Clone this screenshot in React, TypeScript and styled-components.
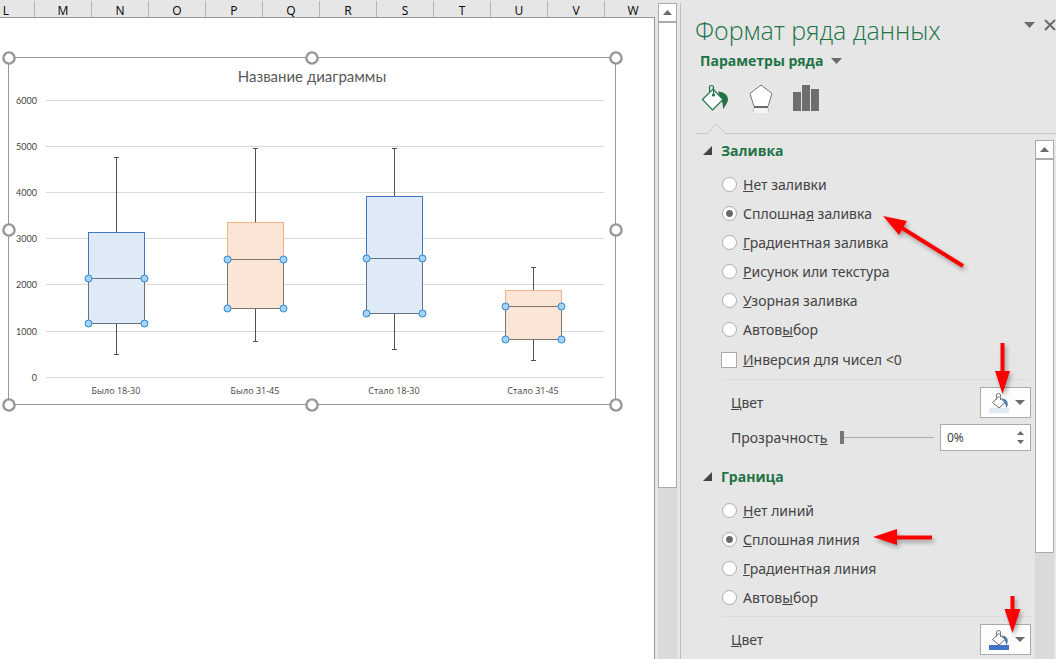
import React, { useState } from 'react';
import styled, { createGlobalStyle } from 'styled-components';

const ui = '"Noto Sans", "Open Sans", sans-serif';
const headingFont = '"Open Sans", "Noto Sans", sans-serif';
const sheetFont = 'Lato, "Noto Sans", sans-serif';

const GlobalStyle = createGlobalStyle`
  * { box-sizing: border-box; }
  body { margin: 0; background: #e6e6e6; font-family: ${ui}; color: #444; }
`;

const Window = styled.div`
  display: flex;
  height: 100vh;
  overflow: hidden;
`;

const Sheet = styled.main`
  flex: 1;
  min-width: 0;
  display: flex;
  flex-direction: column;
  margin-right: 3px;
`;

const ColumnHeads = styled.div`
  display: flex;
  flex: none;
  height: 18px;
  padding-top: 1px;
  overflow: hidden;
  border-bottom: 1px solid #979797;
`;

const ColumnHead = styled.div`
  flex: none;
  width: 57px;
  border-right: 1px solid #b4b4b4;
  text-align: center;
  font: 12px/19px "Noto Sans", sans-serif;
  color: #111;
  &:first-child { margin-left: -22px; }
`;

const Cells = styled.div`
  flex: 1;
  min-height: 0;
  padding-top: 32px;
  background: #fff;
  border-right: 1px solid #979797;
  overflow: hidden;
`;

const ChartSvg = styled.svg`
  display: block;
  font-family: ${sheetFont};
  fill: #595959;
`;

const Scroller = styled.div<{ $top: number }>`
  flex: none;
  width: 19px;
  display: flex;
  flex-direction: column;
  margin-top: ${p => p.$top}px;
  background: #dadada;
`;

const ScrollButton = styled.button`
  flex: none;
  height: 19px;
  padding: 0;
  display: flex;
  align-items: center;
  justify-content: center;
  background: #fff;
  border: 1px solid #ababab;
`;

const Thumb = styled.div<{ $share: number }>`
  height: ${p => p.$share}%;
  background: #fff;
  border: 1px solid #ababab;
`;

const Pane = styled.aside`
  position: relative;
  flex: none;
  width: 376px;
  margin: 3px 0 0 3px;
  border-left: 1px solid #bdbdbd;
  display: flex;
  flex-direction: column;
`;

const PaneHead = styled.header`
  display: flex;
  justify-content: space-between;
  padding: 8px 0 0 14px;
`;

const PaneTitle = styled.h1`
  margin: 0;
  font-family: ${headingFont};
  font-size: 25px;
  line-height: 39px;
  font-weight: 300;
  color: #217346;
`;

const PaneTools = styled.div`
  display: flex;
  align-items: center;
  height: 28px;
  gap: 9px;
`;

const PlainButton = styled.button`
  display: flex;
  align-items: center;
  padding: 0;
  border: 0;
  background: none;
  font: inherit;
  color: inherit;
`;

const SeriesButton = styled(PlainButton)`
  gap: 8px;
  margin-left: 19px;
  font-family: ${headingFont};
  font-size: 14px;
  line-height: 22px;
  font-weight: 700;
  color: #217346;
`;

const Tabs = styled.nav`
  display: flex;
  align-items: center;
  gap: 19px;
  height: 38px;
  margin: 7px 0 0 20px;
`;

const Notch = styled.div`
  display: flex;
  height: 12px;
  margin: 5px 1px 0 14px;
  svg { flex: none; }
  &::before, &::after { content: ''; border-bottom: 1px solid #c6c6c6; }
  &::before { width: 13px; }
  &::after { flex: 1; }
`;

const PaneBody = styled.div`
  flex: 1;
  min-height: 0;
  display: flex;
  padding-right: 2px;
`;

const Options = styled.div`
  flex: 1;
  min-width: 0;
  padding: 4px 4px 0 22px;
  overflow: hidden;
`;

const Section = styled.section`
  & + & { margin-top: 13px; }
`;

const SectionTitle = styled.h2`
  display: flex;
  align-items: center;
  gap: 9px;
  height: 24px;
  margin: 0 0 8px;
  font-family: ${headingFont};
  font-size: 14px;
  font-weight: 700;
  color: #217346;
`;

const SectionBody = styled.div`
  padding-left: 18px;
  font-size: 14px;
`;

const Choice = styled.label`
  display: flex;
  align-items: center;
  gap: 6px;
  height: 29px;
  padding-left: 1px;
`;

const CheckChoice = styled(Choice)`
  height: 31px;
  padding-left: 0;
`;

const Radio = styled.input`
  appearance: none;
  flex: none;
  width: 15px;
  height: 15px;
  margin: 0;
  border: 1px solid #ababab;
  border-radius: 50%;
  background: #fff;
  &:checked { background: radial-gradient(circle, #6a6a6a 3px, #fff 4px); }
`;

const Check = styled.input`
  appearance: none;
  flex: none;
  width: 16px;
  height: 16px;
  margin: 0;
  border: 1px solid #ababab;
  background: #fff;
  &:checked { background: #6a6a6a; }
`;

const Rule = styled.hr`
  height: 1px;
  margin: 4px 0 7px;
  border: 0;
  background: #dcdcdc;
`;

const Field = styled.div`
  display: flex;
  align-items: center;
  padding-left: 10px;
  & + & { margin-top: 6px; }
`;

const ColorButton = styled.button`
  display: flex;
  align-items: center;
  gap: 6px;
  width: 51px;
  height: 31px;
  margin-left: auto;
  padding: 0 0 0 8px;
  background: #fdfdfd;
  border: 1px solid #ababab;
`;

const Slider = styled.input`
  appearance: none;
  flex: none;
  width: 94px;
  height: 13px;
  margin: 0 6px 0 auto;
  background: linear-gradient(#ababab, #ababab) center / 100% 1px no-repeat;
  &::-webkit-slider-thumb {
    appearance: none;
    width: 4px;
    height: 13px;
    background: #777;
  }
`;

const Spinner = styled.div`
  display: flex;
  flex: none;
  width: 91px;
  height: 27px;
  background: #fff;
  border: 1px solid #ababab;
`;

const SpinnerInput = styled.input`
  flex: 1;
  min-width: 0;
  padding: 0 6px;
  border: 0;
  background: none;
  font: 12px ${ui};
  color: #444;
`;

const SpinnerButtons = styled.div`
  display: flex;
  flex-direction: column;
  justify-content: space-evenly;
  padding-right: 6px;
`;

const Notes = styled.svg`
  position: absolute;
  top: -3px;
  left: 0;
  pointer-events: none;
  filter: drop-shadow(2px 3px 2px rgba(0, 0, 0, 0.3));
`;

const Triangle = ({ w, h, up = false }: { w: number; h: number; up?: boolean }) => (
  <svg width={w} height={h} viewBox="0 0 10 10" preserveAspectRatio="none" aria-hidden="true">
    <path d={up ? 'M0 10L5 0L10 10Z' : 'M0 0L5 10L10 0Z'} fill="#6a6a6a" />
  </svg>
);

const zeroY = 377;
const scale = 46.2 / 1000;
const y = (v: number) => Math.floor(zeroY - v * scale + 0.3) + 0.5;

const boxes = [
  { label: 'Было 18-30', x: 116, low: 500, q1: 1165, mid: 2130, q3: 3140, high: 4760, warm: false },
  { label: 'Было 31-45', x: 255, low: 780, q1: 1490, mid: 2550, q3: 3350, high: 4950, warm: true },
  { label: 'Стало 18-30', x: 394, low: 605, q1: 1380, mid: 2575, q3: 3920, high: 4950, warm: false },
  { label: 'Стало 31-45', x: 533, low: 370, q1: 810, mid: 1530, q3: 1880, high: 2370, warm: true },
];

const frameHandles = [
  [9, 58], [312, 58], [616, 58], [9, 230], [616, 230], [9, 405], [312, 405], [616, 405],
];

const Chart = () => (
  <ChartSvg width="625" height="362" viewBox="0 50 625 362" role="img" aria-label="Название диаграммы">
    <rect x="8.5" y="57.5" width="607" height="347" fill="#fff" stroke="#979797" />
    <text x="312" y="82" fontSize="15" textAnchor="middle">Название диаграммы</text>
    {[0, 1000, 2000, 3000, 4000, 5000, 6000].map(v => (
      <g key={v}>
        <path d={`M46 ${y(v)}H604`} stroke="#d9d9d9" />
        <text x="37" y={y(v) + 3} fontSize="9" textAnchor="end" fill="#444">{v}</text>
      </g>
    ))}
    {boxes.map(b => {
      const l = b.x - 27.5;
      return (
        <g key={b.label} fill="none">
          <path d={`M${b.x - 2} ${y(b.high)}h5m-2.5 0V${y(b.q3)}M${b.x + 0.5} ${y(b.q1)}V${y(b.low)}m-2.5 0h5`} stroke="#505050" />
          <rect x={l} y={y(b.q3)} width="56" height={y(b.q1) - y(b.q3)} fill={b.warm ? '#fbe5d6' : '#deeaf6'} stroke={b.warm ? '#f4b183' : '#4472c4'} />
          <rect x={l} y={y(b.mid)} width="56" height={y(b.q1) - y(b.mid)} stroke={b.warm ? '#7f736c' : '#66728a'} />
          {[l, l + 56].map(cx => [b.mid, b.q1].map(v => (
            <circle key={`${cx}-${v}`} cx={cx} cy={y(v)} r="3.5" fill="#a8d1f2" stroke="#2488d8" />
          )))}
          <text x={b.x} y="394" fontSize="9" textAnchor="middle" fill="#444" fontFamily="Open Sans, Noto Sans, sans-serif">{b.label}</text>
        </g>
      );
    })}
    {frameHandles.map(([cx, cy]) => (
      <circle key={`${cx}-${cy}`} cx={cx} cy={cy} r="5.6" fill="#fff" stroke="#979797" strokeWidth="2.400" />
    ))}
  </ChartSvg>
);

const FillTabIcon = () => (
  <svg width="28" height="28" viewBox="0 0 28 28" aria-hidden="true">
    <path d="M17 7.500C23 8 27 11 27 15.500C27 19 23.500 22 22.500 25.500C21.500 21 22 18 19 13Z" fill="#217346" />
    <path d="M1.500 15.500L12 5L22 15.500L11.500 26Z" fill="#fff" stroke="#217346" strokeWidth="1.200" />
    <path d="M8.500 8V3.500Q8.500 1.500 10.500 1.500T12.500 3.500V11" fill="none" stroke="#217346" strokeWidth="1.200" />
    <circle cx="12.500" cy="11" r="1.600" fill="#217346" />
  </svg>
);

const EffectsTabIcon = () => (
  <svg width="26" height="30" viewBox="0 0 26 30" aria-hidden="true">
    <path d="M6 25H20L22 30H4Z" fill="#f5f5f5" />
    <path d="M6 25L4.500 29.500M20 25L21.500 29.500" stroke="#c0c0c0" />
    <path d="M13 2L24 10.500L20 23.500H6L2 10.500Z" fill="#fff" stroke="#777" />
    <path d="M6 24H20" stroke="#6a6a6a" strokeWidth="2" />
  </svg>
);

const SeriesTabIcon = () => (
  <svg width="26" height="26" viewBox="0 0 26 26" fill="#6e6e6e" aria-hidden="true">
    <path d="M0 7H8V26H0ZM9 0H17V26H9ZM18 4H26V26H18Z" />
  </svg>
);

const SwatchIcon = ({ color }: { color: string }) => (
  <svg width="20" height="20" viewBox="0 0 20 20" aria-hidden="true">
    <path d="M13 5.500C18 6 20.500 10 17.500 15C16.500 12 16.500 10 13 8Z" fill="#4a7fb5" />
    <path d="M3.500 9.500L10 3.500L16 9.500L10 15Z" fill="#fff" stroke="#6a6a6a" />
    <path d="M7.500 6.500V2Q7.500 0.500 9.500 0.500T11.500 2V7" fill="none" stroke="#777" />
    <rect y="15" width="20" height="5" fill={color} />
  </svg>
);

// A text label whose access key letter is underlined.
const Keyed = ({ text, at }: { text: string; at: number }) => (
  <span>{text.slice(0, at)}<u>{text[at]}</u>{text.slice(at + 1)}</span>
);

type Option = [text: string, key: number];

const RadioList = ({ name, options }: { name: string; options: Option[] }) => (
  <>
    {options.map(([text, at], i) => (
      <Choice key={text}>
        <Radio type="radio" name={name} defaultChecked={i === 1} />
        <Keyed text={text} at={at} />
      </Choice>
    ))}
  </>
);

const Heading = ({ children }: { children: string }) => (
  <SectionTitle>
    <svg width="9" height="9" viewBox="0 0 9 9" aria-hidden="true"><path d="M9 0V9H0Z" fill="#444" /></svg>
    {children}
  </SectionTitle>
);

const ColorField = ({ id, color }: { id: string; color: string }) => (
  <Field>
    <label htmlFor={id}><Keyed text="Цвет" at={0} /></label>
    <ColorButton id={id} type="button"><SwatchIcon color={color} /><Triangle w={10} h={5} /></ColorButton>
  </Field>
);

const Scrollbar = ({ top, share }: { top: number; share: number }) => (
  <Scroller $top={top}>
    <ScrollButton type="button" aria-label="Вверх"><Triangle w={9} h={5} up /></ScrollButton>
    <Thumb $share={share} />
  </Scroller>
);

export default function App() {
  const [opacity, setOpacity] = useState(0);
  const step = (d: number) => setOpacity(v => Math.min(100, Math.max(0, v + d)));
  return (
    <Window>
      <GlobalStyle />
      <Sheet>
        <ColumnHeads>
          {[...'LMNOPQRSTUVW'].map(c => <ColumnHead key={c}>{c}</ColumnHead>)}
        </ColumnHeads>
        <Cells><Chart /></Cells>
      </Sheet>
      <Scrollbar top={3} share={71} />
      <Pane>
        <PaneHead>
          <PaneTitle>Формат ряда данных</PaneTitle>
          <PaneTools>
            <PlainButton type="button" aria-label="Параметры области"><Triangle w={11} h={6} /></PlainButton>
            <PlainButton type="button" aria-label="Закрыть">
              <svg width="12" height="12" viewBox="0 0 12 12"><path d="M1 1L11 11M11 1L1 11" stroke="#6a6a6a" strokeWidth="2" /></svg>
            </PlainButton>
          </PaneTools>
        </PaneHead>
        <SeriesButton type="button">Параметры ряда <Triangle w={11} h={6} /></SeriesButton>
        <Tabs>
          <PlainButton type="button" aria-label="Заливка и границы"><FillTabIcon /></PlainButton>
          <PlainButton type="button" aria-label="Эффекты"><EffectsTabIcon /></PlainButton>
          <PlainButton type="button" aria-label="Параметры ряда"><SeriesTabIcon /></PlainButton>
        </Tabs>
        <Notch>
          <svg width="17" height="12" viewBox="0 0 17 12" aria-hidden="true"><path d="M0 11.500L8.500 1.500L17 11.500" fill="none" stroke="#c6c6c6" /></svg>
        </Notch>
        <PaneBody>
          <Options>
            <Section>
              <Heading>Заливка</Heading>
              <SectionBody>
                <RadioList name="fill" options={[['Нет заливки', 0], ['Сплошная заливка', 7], ['Градиентная заливка', 0], ['Рисунок или текстура', 0], ['Узорная заливка', 0], ['Автовыбор', 5]]} />
                <CheckChoice><Check type="checkbox" /><Keyed text="Инверсия для чисел <0" at={0} /></CheckChoice>
                <Rule />
                <ColorField id="fill-color" color="#deeaf6" />
                <Field>
                  <label htmlFor="opacity"><Keyed text="Прозрачность" at={11} /></label>
                  <Slider type="range" id="opacity" value={opacity} onChange={e => setOpacity(+e.target.value)} />
                  <Spinner>
                    <SpinnerInput aria-label="Прозрачность" value={`${opacity}%`} onChange={e => setOpacity(parseInt(e.target.value) || 0)} />
                    <SpinnerButtons>
                      <PlainButton type="button" aria-label="Больше" onClick={() => step(1)}><Triangle w={7} h={4} up /></PlainButton>
                      <PlainButton type="button" aria-label="Меньше" onClick={() => step(-1)}><Triangle w={7} h={4} /></PlainButton>
                    </SpinnerButtons>
                  </Spinner>
                </Field>
              </SectionBody>
            </Section>
            <Section>
              <Heading>Граница</Heading>
              <SectionBody>
                <RadioList name="border" options={[['Нет линий', 0], ['Сплошная линия', 0], ['Градиентная линия', 0], ['Автовыбор', 5]]} />
                <Rule />
                <ColorField id="border-color" color="#4472c4" />
              </SectionBody>
            </Section>
          </Options>
          <Scrollbar top={6} share={76} />
        </PaneBody>
        <Notes width="375" height="659" viewBox="681 0 375 659" fill="#f00" stroke="#f00" strokeWidth="4" aria-hidden="true">
          <path d="M963 266L902 228M1002.500 343V373M932 537.500H896M1012.500 596V611" />
          <path stroke="none" d="M883 216L907 221L899 235ZM1002.500 394L995 371H1010ZM873 537L897 529V545ZM1012.500 633L1004.500 609H1020.500Z" />
        </Notes>
      </Pane>
    </Window>
  );
}
